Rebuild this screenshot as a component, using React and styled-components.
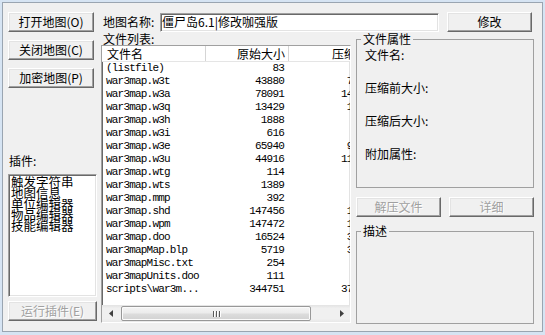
import React from 'react';
import styled, { createGlobalStyle, css } from 'styled-components';

const GlobalStyle = createGlobalStyle`
  html, body { margin: 0; padding: 0; background: #d6e4f3; }
  body {
    font-family: "Noto Sans CJK SC", "Noto Sans", sans-serif;
    font-size: 12px;
    color: #000;
  }
  * { box-sizing: border-box; }
`;

const sunken = css`
  border: 1px solid;
  border-color: #a0a0a0 #ffffff #ffffff #a0a0a0;
  box-shadow: inset 1px 1px 0 #696969, inset -1px -1px 0 #e3e3e3;
`;

const Window = styled.div`
  width: 545px;
  height: 335px;
  background: #d6e4f3;
  padding: 2px 2px 0 2px;
  overflow: hidden;
`;

const Client = styled.div`
  width: 541px;
  height: 330px;
  border: 1px solid #9aa5b1;
  background: #f0f0f0;
  display: flex;
  gap: 4px;
  padding: 9px 8px 0 5px;
`;

const LeftPanel = styled.div`
  width: 89px;
  flex: none;
  display: flex;
  flex-direction: column;
`;

const ButtonStack = styled.div`
  display: flex;
  flex-direction: column;
  gap: 8px;
`;

const Btn = styled.button`
  width: ${(p) => p.$w}px;
  height: 20px;
  flex: none;
  padding: 0;
  margin: 0;
  font-family: "Noto Sans CJK SC", sans-serif;
  font-size: 12px;
  line-height: 16px;
  color: #000;
  background: #f0f0f0;
  border: 1px solid;
  border-color: #ffffff #696969 #696969 #ffffff;
  box-shadow: inset -1px -1px 0 #a0a0a0, inset 1px 1px 0 #e3e3e3;
  &:disabled {
    color: #a0a0a0;
    text-shadow: 1px 1px 0 #ffffff;
  }
`;

const PluginLabel = styled.div`
  margin-top: 65px;
  height: 16px;
  line-height: 16px;
  padding-left: 1px;
`;

const PluginList = styled.div`
  ${sunken};
  margin-top: 5px;
  height: 123px;
  background: #fff;
  padding: 1px 2px;
`;

const PluginItem = styled.div`
  font-size: 12.5px;
  line-height: 11px;
  white-space: nowrap;
`;

const RunRow = styled.div`
  margin-top: 4px;
`;

const Main = styled.div`
  width: 433px;
  flex: none;
  display: flex;
  flex-direction: column;
`;

const TopRow = styled.div`
  display: flex;
  align-items: center;
  height: 20px;
`;

const NameLabel = styled.div`
  width: 61px;
  padding-left: 2px;
  line-height: 16px;
  white-space: nowrap;
`;

const TextInput = styled.div`
  ${sunken};
  width: 279px;
  height: 19px;
  background: #fff;
  padding-left: 1px;
  line-height: 15px;
  white-space: nowrap;
  margin-right: 8px;
  margin-left: -2px;
`;

const BottomRow = styled.div`
  display: flex;
  gap: 5px;
  margin-top: 1px;
`;

const FileColumn = styled.div`
  width: 250px;
  display: flex;
  flex-direction: column;
`;

const ListLabel = styled.div`
  height: 12px;
  line-height: 12px;
  padding-left: 2px;
`;

const ListView = styled.div`
  ${sunken};
  height: 278px;
  background: #fff;
  display: flex;
  flex-direction: column;
  overflow: hidden;
`;

const HeaderRow = styled.div`
  display: flex;
  height: 16px;
  flex: none;
  border-bottom: 1px solid #e5e5e5;
  background: #ffffff;
`;

const HeadCell = styled.div`
  width: ${(p) => p.$w}px;
  flex: none;
  line-height: 15px;
  text-align: ${(p) => p.$align || 'left'};
  padding: 0 ${(p) => p.$pr || 0}px 0 ${(p) => p.$pl || 0}px;
  border-right: 1px solid #d5d5d5;
  white-space: nowrap;
  overflow: hidden;
`;

const Row = styled.div`
  display: flex;
  height: 13px;
  flex: none;
`;

const Cell = styled.div`
  width: ${(p) => p.$w}px;
  flex: none;
  font-family: "Liberation Mono", "DejaVu Sans Mono", monospace;
  font-size: 11px;
  letter-spacing: -0.8px;
  line-height: 13px;
  text-align: ${(p) => p.$align || 'left'};
  padding: 0 ${(p) => p.$pr || 0}px 0 ${(p) => p.$pl || 0}px;
  white-space: nowrap;
  overflow: hidden;
`;

const Spacer = styled.div`
  flex: 1;
`;

const HScroll = styled.div`
  height: 17px;
  flex: none;
  display: flex;
  background: linear-gradient(#e3e3e3, #f0f0f0 20%, #f0f0f0 80%, #e8e8e8);
`;

const Arrow = styled.div`
  width: 17px;
  flex: none;
  display: flex;
  align-items: center;
  justify-content: center;
`;

const Track = styled.div`
  flex: 1;
  display: flex;
  padding: 1px 2px;
`;

const Thumb = styled.div`
  width: 190px;
  height: 15px;
  border: 1px solid #989898;
  border-radius: 2px;
  background: linear-gradient(#f5f5f5, #ececec 45%, #dcdcdc 55%, #d2d2d2);
  box-shadow: inset 0 0 0 1px #fbfbfb;
  display: flex;
  align-items: center;
  justify-content: center;
  gap: 2px;
`;

const Grip = styled.span`
  width: 1px;
  height: 6px;
  background: #5a5a5a;
  box-shadow: 1px 0 0 #ffffff;
`;

const RightColumn = styled.div`
  width: 178px;
  display: flex;
  flex-direction: column;
`;

const Group = styled.fieldset`
  margin: ${(p) => p.$mt || 0}px 0 0 0;
  height: ${(p) => p.$h}px;
  border: 1px solid #a0a0a0;
  padding: 2px 8px 0 8px;
  min-width: 0;
  display: flex;
  flex-direction: column;
  gap: 17px;
`;

const Legend = styled.legend`
  padding: 0 2px;
  margin-left: -4px;
  line-height: 12px;
  font-size: 12px;
`;

const FieldLabel = styled.div`
  line-height: 16px;
  white-space: nowrap;
`;

const ButtonRow = styled.div`
  margin-top: 9px;
  display: flex;
  gap: 8px;
`;

const files = [
  ['(listfile)', '83', ''],
  ['war3map.w3t', '43880', '7532'],
  ['war3map.w3a', '78091', '14620'],
  ['war3map.w3q', '13429', '1893'],
  ['war3map.w3h', '1888', '521'],
  ['war3map.w3i', '616', '233'],
  ['war3map.w3e', '65940', '9012'],
  ['war3map.w3u', '44916', '11356'],
  ['war3map.wtg', '114', '36'],
  ['war3map.wts', '1389', '487'],
  ['war3map.mmp', '392', '163'],
  ['war3map.shd', '147456', '1604'],
  ['war3map.wpm', '147472', '1388'],
  ['war3map.doo', '16524', '3215'],
  ['war3mapMap.blp', '5719', '3402'],
  ['war3mapMisc.txt', '254', '187'],
  ['war3mapUnits.doo', '111', '96'],
  ['scripts\\war3m...', '344751', '37154'],
];

const plugins = ['触发字符串', '地图信息', '单位编辑器', '物品编辑器', '技能编辑器'];

export default function App() {
  return (
    <>
      <GlobalStyle />
      <Window>
        <Client>
          <LeftPanel>
            <ButtonStack>
              <Btn $w={86}>打开地图(O)</Btn>
              <Btn $w={86}>关闭地图(C)</Btn>
              <Btn $w={86}>加密地图(P)</Btn>
            </ButtonStack>
            <PluginLabel>插件:</PluginLabel>
            <PluginList>
              {plugins.map((p) => (
                <PluginItem key={p}>{p}</PluginItem>
              ))}
            </PluginList>
            <RunRow>
              <Btn $w={89} disabled>运行插件(E)</Btn>
            </RunRow>
          </LeftPanel>
          <Main>
            <TopRow>
              <NameLabel>地图名称:</NameLabel>
              <TextInput>僵尸岛6.1|修改咖强版</TextInput>
              <Btn $w={85}>修改</Btn>
            </TopRow>
            <BottomRow>
              <FileColumn>
                <ListLabel>文件列表:</ListLabel>
                <ListView>
                  <HeaderRow>
                    <HeadCell $w={104} $pl={5}>文件名</HeadCell>
                    <HeadCell $w={83} $align="right" $pr={3}>原始大小</HeadCell>
                    <HeadCell $w={96} $align="right" $pr={4}>压缩大小</HeadCell>
                  </HeaderRow>
                  {files.map(([n, a, b]) => (
                    <Row key={n}>
                      <Cell $w={104} $pl={4}>{n}</Cell>
                      <Cell $w={83} $align="right" $pr={5}>{a}</Cell>
                      <Cell $w={96} $align="right" $pr={15}>{b}</Cell>
                    </Row>
                  ))}
                  <Spacer />
                  <HScroll>
                    <Arrow>
                      <svg width="4" height="7" viewBox="0 0 4 7">
                        <polygon points="4,0 4,7 0,3.5" fill="#404040" />
                      </svg>
                    </Arrow>
                    <Track>
                      <Thumb>
                        <Grip />
                        <Grip />
                        <Grip />
                      </Thumb>
                    </Track>
                    <Arrow>
                      <svg width="4" height="7" viewBox="0 0 4 7">
                        <polygon points="0,0 0,7 4,3.5" fill="#404040" />
                      </svg>
                    </Arrow>
                  </HScroll>
                </ListView>
              </FileColumn>
              <RightColumn>
                <Group $h={155}>
                  <Legend>文件属性</Legend>
                  <FieldLabel>文件名:</FieldLabel>
                  <FieldLabel>压缩前大小:</FieldLabel>
                  <FieldLabel>压缩后大小:</FieldLabel>
                  <FieldLabel>附加属性:</FieldLabel>
                </Group>
                <ButtonRow>
                  <Btn $w={85} disabled>解压文件</Btn>
                  <Btn $w={85} disabled>详细</Btn>
                </ButtonRow>
                <Group $h={99} $mt={8}>
                  <Legend>描述</Legend>
                </Group>
              </RightColumn>
            </BottomRow>
          </Main>
        </Client>
      </Window>
    </>
  );
}
